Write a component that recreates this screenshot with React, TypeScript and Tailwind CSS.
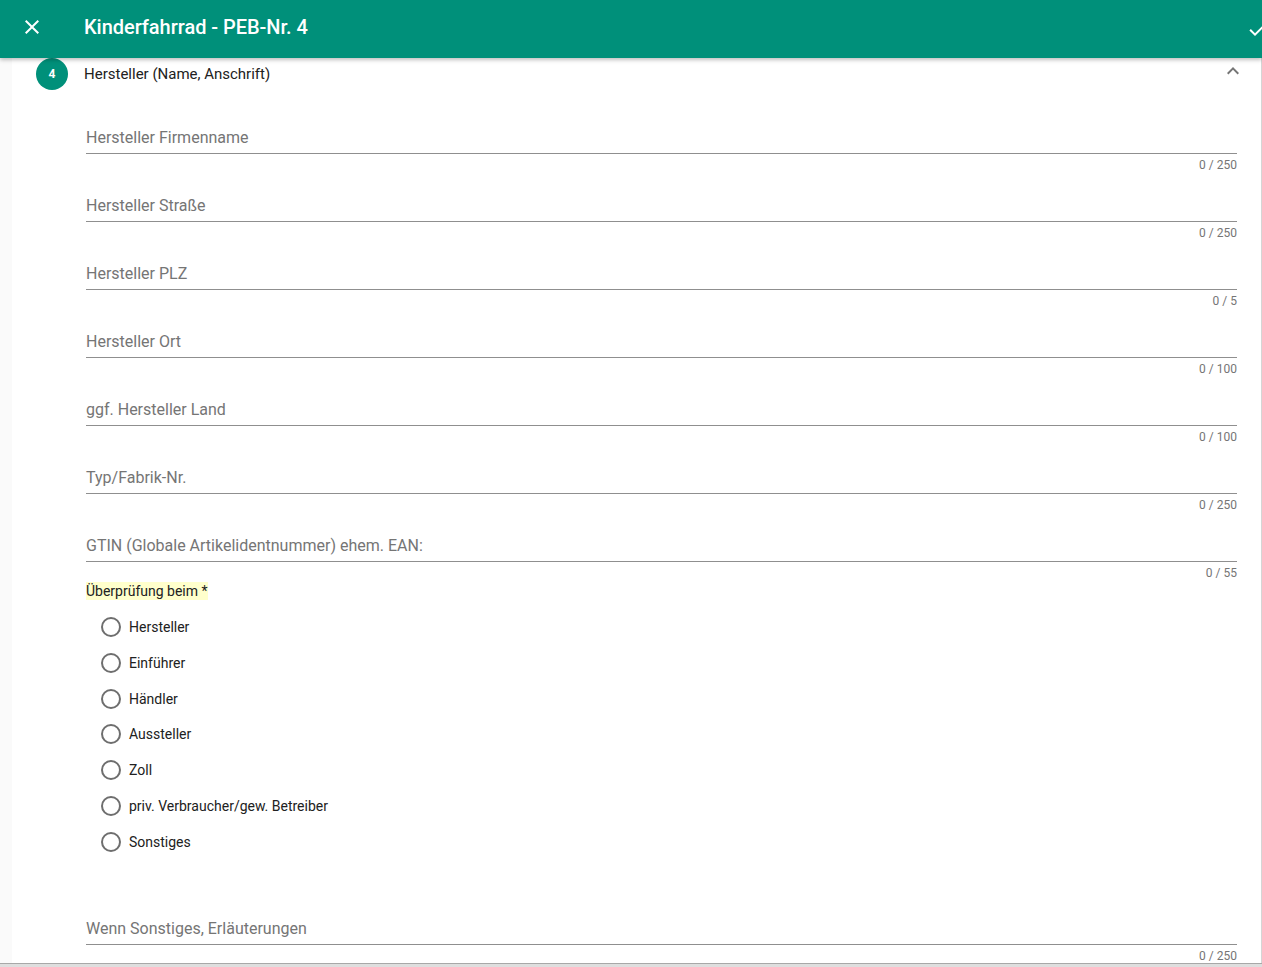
const fields = [
  { label: "Hersteller Firmenname", max: 250 },
  { label: "Hersteller Straße", max: 250 },
  { label: "Hersteller PLZ", max: 5 },
  { label: "Hersteller Ort", max: 100 },
  { label: "ggf. Hersteller Land", max: 100 },
  { label: "Typ/Fabrik-Nr.", max: 250 },
  { label: "GTIN (Globale Artikelidentnummer) ehem. EAN:", max: 55 },
];

const options = [
  "Hersteller",
  "Einführer",
  "Händler",
  "Aussteller",
  "Zoll",
  "priv. Verbraucher/gew. Betreiber",
  "Sonstiges",
];

function Field({ label, max }: { label: string; max: number }) {
  return (
    <div className="h-[68px]">
      <div className="flex h-[48px] items-end border-b border-[#8f8f8f] pb-[3px]">
        <span className="text-base leading-6 text-[#757575]">{label}</span>
      </div>
      <div className="mt-[3px] text-right text-xs leading-4 text-[#757575]">0 / {max}</div>
    </div>
  );
}

export default function App() {
  return (
    <div className="relative flex h-[967px] flex-col overflow-hidden bg-[#fafafa] font-['Roboto',sans-serif]">
      <header className="relative z-10 flex h-[58px] shrink-0 items-center justify-between overflow-hidden bg-[#00907a] pl-[20px] text-white shadow-[0_2px_4px_rgba(0,0,0,0.25)]">
        <div className="flex items-center pb-[4px]">
          <svg viewBox="0 0 24 24" className="h-6 w-6 fill-white">
            <path d="M19 6.41L17.59 5 12 10.59 6.41 5 5 6.41 10.59 12 5 17.59 6.41 19 12 13.41 17.59 19 19 17.59 13.41 12z" />
          </svg>
          <h1 className="-mt-[1px] ml-[40px] text-xl font-medium leading-6 tracking-[-0.04px]">Kinderfahrrad - PEB-Nr. 4</h1>
        </div>
        <svg viewBox="0 0 24 24" className="-mr-[8px] h-6 w-6 shrink-0 fill-white">
          <path d="M9 16.17L4.83 12l-1.42 1.41L9 19 21 7l-1.41-1.41z" />
        </svg>
      </header>

      <main className="ml-[12px] flex-1 border-r border-[#d5d5d5] bg-white pr-[24px]">
        <div className="flex h-[32px] items-center pl-[24px] pr-0">
          <div className="flex h-8 w-8 items-center justify-center rounded-full bg-[#00907a] text-xs font-bold text-white">4</div>
          <span className="ml-[16px] flex-1 text-[15px] text-[#212121]">Hersteller (Name, Anschrift)</span>
          <svg viewBox="0 0 24 24" className="-mr-[8px] -mt-[6px] h-6 w-6 fill-[#757575]">
            <path d="M7.41 15.41L12 10.83l4.59 4.58L18 14l-6-6-6 6z" />
          </svg>
        </div>

        <div className="ml-[74px] mt-[16px]">
          {fields.map((f) => (
            <Field key={f.label} label={f.label} max={f.max} />
          ))}

          <div className="h-[18px] w-fit bg-[#ffffcc] text-sm leading-[18px] text-[#212121]">Überprüfung beim *</div>

          <div className="mt-[9.15px] pl-[15px]">
            {options.map((o) => (
              <div key={o} className="flex h-[35.8px] items-center">
                <span className="h-5 w-5 rounded-full border-2 border-[#6e6e6e]" />
                <span className="ml-[8px] text-sm text-[#212121]">{o}</span>
              </div>
            ))}
          </div>

          <div className="mt-[36.85px]">
            <Field label="Wenn Sonstiges, Erläuterungen" max={250} />
          </div>
        </div>
      </main>

      <div className="absolute inset-x-0 bottom-0 h-[4px] border-t border-[#a8a8a8] bg-[#dedede]" />
    </div>
  );
}
